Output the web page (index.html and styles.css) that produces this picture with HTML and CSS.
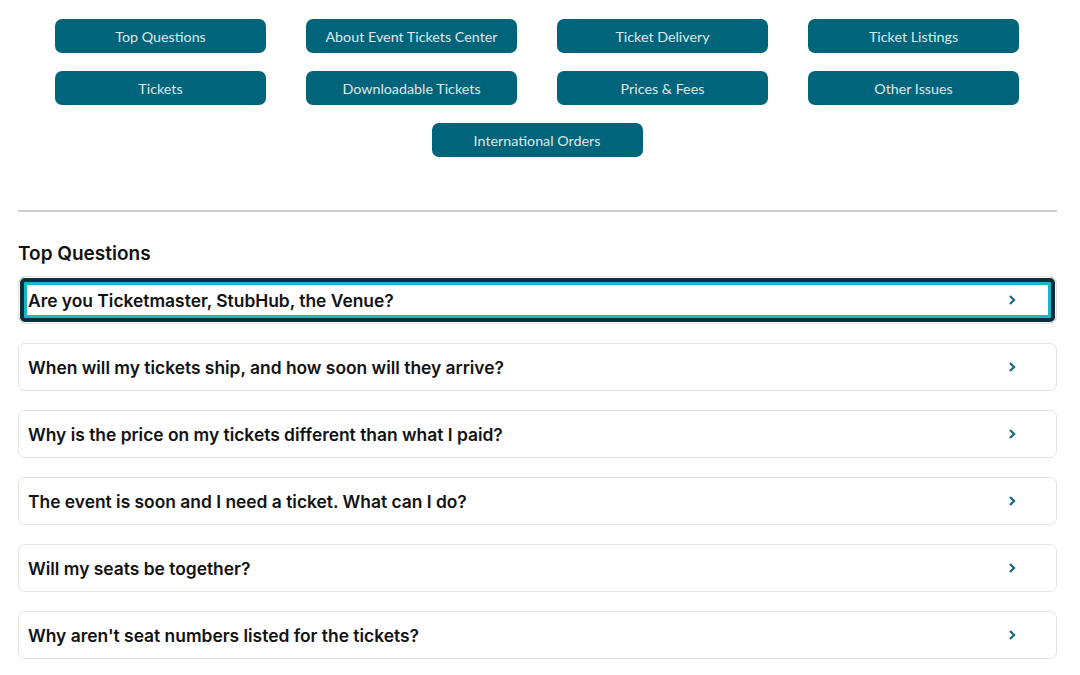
FILE: index.html
```html
<!DOCTYPE html>
<html>
<head>
<meta charset="utf-8">
<link rel="stylesheet" href="styles.css">
</head>
<body>
<div class="page">
  <nav class="cats">
    <a class="cat">Top Questions</a>
    <a class="cat">About Event Tickets Center</a>
    <a class="cat">Ticket Delivery</a>
    <a class="cat">Ticket Listings</a>
    <a class="cat">Tickets</a>
    <a class="cat">Downloadable Tickets</a>
    <a class="cat">Prices &amp; Fees</a>
    <a class="cat">Other Issues</a>
    <a class="cat">International Orders</a>
  </nav>
  <hr class="rule">
  <h2 class="title">Top Questions</h2>
  <div class="list">
    <div class="q focus"><span>Are you Ticketmaster, StubHub, the Venue?</span><svg class="chev" viewBox="0 0 8 12"><path d="M2 2l4 4-4 4"/></svg></div>
    <div class="q"><span>When will my tickets ship, and how soon will they arrive?</span><svg class="chev" viewBox="0 0 8 12"><path d="M2 2l4 4-4 4"/></svg></div>
    <div class="q"><span>Why is the price on my tickets different than what I paid?</span><svg class="chev" viewBox="0 0 8 12"><path d="M2 2l4 4-4 4"/></svg></div>
    <div class="q"><span>The event is soon and I need a ticket. What can I do?</span><svg class="chev" viewBox="0 0 8 12"><path d="M2 2l4 4-4 4"/></svg></div>
    <div class="q"><span>Will my seats be together?</span><svg class="chev" viewBox="0 0 8 12"><path d="M2 2l4 4-4 4"/></svg></div>
    <div class="q"><span>Why aren't seat numbers listed for the tickets?</span><svg class="chev" viewBox="0 0 8 12"><path d="M2 2l4 4-4 4"/></svg></div>
  </div>
</div>
</body>
</html>
```
FILE: styles.css
```css
html, body { margin: 0; padding: 0; background: #fff; }
.page {
  width: 1039px;
  margin-left: 18px;
  padding-top: 19px;
}
.cats {
  display: flex;
  flex-wrap: wrap;
  justify-content: center;
  gap: 18px 40px;
  padding: 0 38px 0 37px;
}
.cat {
  width: 211px;
  height: 34px;
  box-sizing: border-box;
  background: #00657a;
  border-radius: 7px;
  color: #dde9ed;
  font-family: Lato, "Noto Sans", sans-serif;
  font-size: 14.3px;
  display: flex;
  align-items: center;
  justify-content: center;
}
.rule {
  margin: 53px 0 0;
  border: 0;
  height: 2px;
  background: #cfcfcf;
}
.title {
  margin: 30px 0 0;
  font-family: Inter, sans-serif;
  font-weight: 600;
  font-size: 19px;
  line-height: 24px;
  color: #111;
}
.list {
  margin-top: 10px;
  display: flex;
  flex-direction: column;
  gap: 19px;
}
.q {
  height: 48px;
  box-sizing: border-box;
  border: 1px solid #e4e4e4;
  border-radius: 7px;
  display: flex;
  align-items: center;
  justify-content: space-between;
  padding: 0 40px 0 9px;
  font-family: Inter, sans-serif;
  font-weight: 600;
  font-size: 17.4px;
  color: #121212;
}
.q.focus {
  box-shadow: inset 0 0 0 1px #fff, inset 0 0 0 5px #0b2f3b, inset 0 0 0 8px #17b6c8;
}
.chev {
  width: 8px;
  height: 12px;
  fill: none;
  stroke: #1f6f87;
  stroke-width: 2.4;
}
```
